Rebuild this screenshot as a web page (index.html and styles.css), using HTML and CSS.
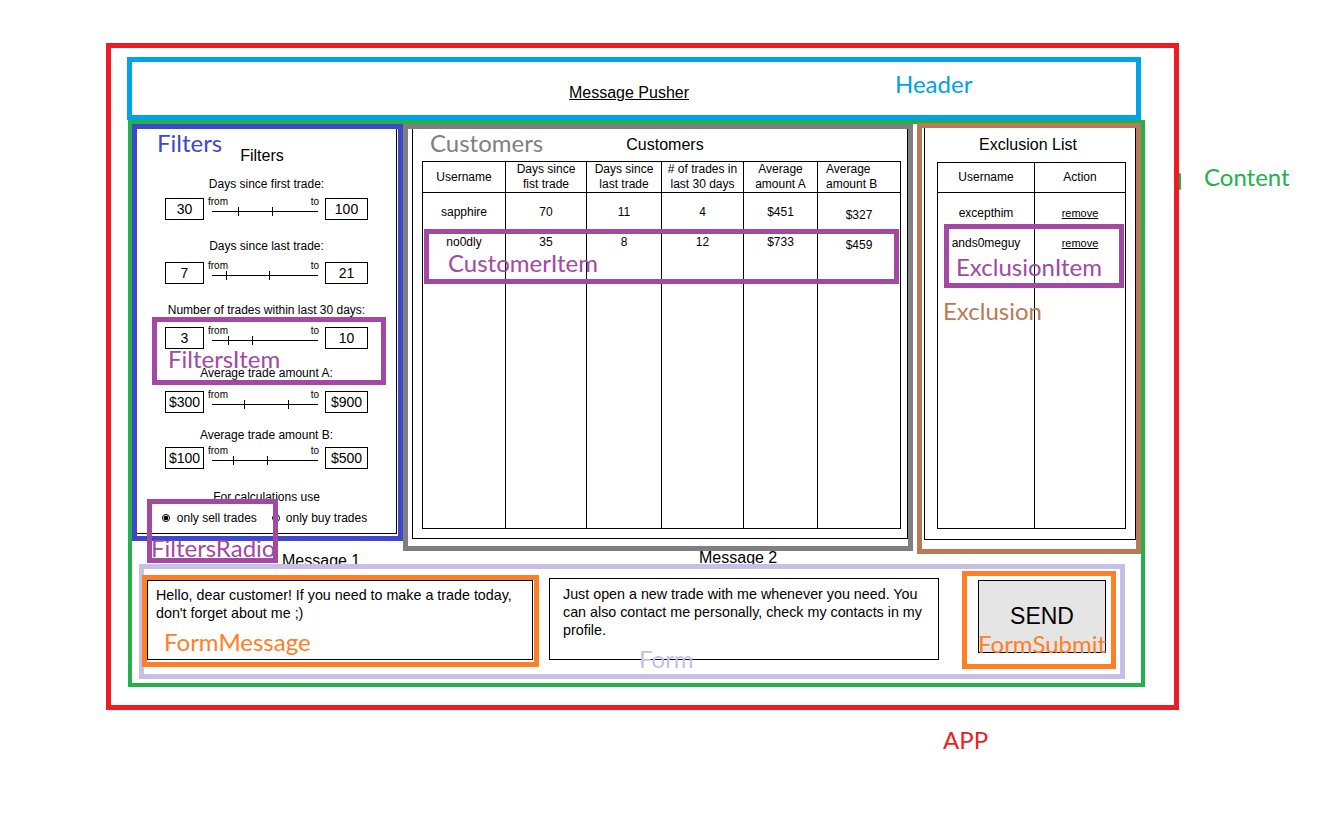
FILE: index.html
```html
<!DOCTYPE html>
<html lang="en">

<head>
    <meta charset="UTF-8">
    <meta name="viewport" content="width=device-width, initial-scale=1.0">
    <title>Message Pusher</title>
    <link rel="stylesheet" href="styles.css">
</head>

<body>
    <div class="app">
        <header class="header">
            <a class="header-title" href="#">Message Pusher</a>
            <span class="note note-header">Header</span>
        </header>

        <main class="content">
            <span class="note note-content">Content</span>
            <span class="content-mark"></span>

            <div class="panels">
                <!-- Filters -->
                <section class="filters">
                    <div class="filters-panel">
                        <h2 class="panel-title">Filters</h2>

                        <div class="filter">
                            <div class="filter-label">Days since first trade:</div>
                            <div class="filter-row">
                                <span class="filter-box">30</span>
                                <div class="slider">
                                    <span class="slider-from">from</span>
                                    <span class="slider-to">to</span>
                                    <span class="tick" style="left: 26px"></span>
                                    <span class="tick" style="left: 60px"></span>
                                </div>
                                <span class="filter-box filter-box-to">100</span>
                            </div>
                        </div>

                        <div class="filter">
                            <div class="filter-label">Days since last trade:</div>
                            <div class="filter-row">
                                <span class="filter-box">7</span>
                                <div class="slider">
                                    <span class="slider-from">from</span>
                                    <span class="slider-to">to</span>
                                    <span class="tick" style="left: 14px"></span>
                                    <span class="tick" style="left: 57px"></span>
                                </div>
                                <span class="filter-box filter-box-to">21</span>
                            </div>
                        </div>

                        <div class="filter">
                            <div class="filter-label">Number of trades within last 30 days:</div>
                            <div class="filter-row">
                                <span class="filter-box">3</span>
                                <div class="slider">
                                    <span class="slider-from">from</span>
                                    <span class="slider-to">to</span>
                                    <span class="tick" style="left: 16px"></span>
                                    <span class="tick" style="left: 40px"></span>
                                </div>
                                <span class="filter-box filter-box-to">10</span>
                            </div>
                        </div>

                        <div class="filter">
                            <div class="filter-label">Average trade amount A:</div>
                            <div class="filter-row">
                                <span class="filter-box">$300</span>
                                <div class="slider">
                                    <span class="slider-from">from</span>
                                    <span class="slider-to">to</span>
                                    <span class="tick" style="left: 32px"></span>
                                    <span class="tick" style="left: 76px"></span>
                                </div>
                                <span class="filter-box filter-box-to">$900</span>
                            </div>
                        </div>

                        <div class="filter">
                            <div class="filter-label">Average trade amount B:</div>
                            <div class="filter-row">
                                <span class="filter-box">$100</span>
                                <div class="slider">
                                    <span class="slider-from">from</span>
                                    <span class="slider-to">to</span>
                                    <span class="tick" style="left: 21px"></span>
                                    <span class="tick" style="left: 55px"></span>
                                </div>
                                <span class="filter-box filter-box-to">$500</span>
                            </div>
                        </div>

                        <div class="calc-label">For calculations use</div>
                        <div class="radios">
                            <label class="radio"><span class="radio-dot radio-dot-checked"></span>only sell trades</label>
                            <label class="radio"><span class="radio-dot"></span>only buy trades</label>
                        </div>
                    </div>

                    <span class="note note-filters">Filters</span>
                    <div class="mark mark-filters-item">
                        <span class="note note-filters-item">FiltersItem</span>
                    </div>
                    <div class="mark mark-filters-radio">
                        <span class="note note-filters-radio">FiltersRadio</span>
                    </div>
                </section>

                <!-- Customers -->
                <section class="customers">
                    <div class="customers-panel">
                        <h2 class="panel-title">Customers</h2>
                        <table class="table customers-table">
                            <thead>
                                <tr>
                                    <th class="col-user">Username</th>
                                    <th class="col-first">Days since<br>fist trade</th>
                                    <th class="col-last">Days since<br>last trade</th>
                                    <th class="col-trades"># of trades in<br>last 30 days</th>
                                    <th class="col-amount-a">Average<br>amount A</th>
                                    <th class="col-amount-b">Average<br>amount B</th>
                                </tr>
                            </thead>
                            <tbody>
                                <tr class="row">
                                    <td>sapphire</td>
                                    <td>70</td>
                                    <td>11</td>
                                    <td>4</td>
                                    <td>$451</td>
                                    <td>$327</td>
                                </tr>
                                <tr class="row">
                                    <td>no0dly</td>
                                    <td>35</td>
                                    <td>8</td>
                                    <td>12</td>
                                    <td>$733</td>
                                    <td>$459</td>
                                </tr>
                                <tr class="row-filler">
                                    <td></td>
                                    <td></td>
                                    <td></td>
                                    <td></td>
                                    <td></td>
                                    <td></td>
                                </tr>
                            </tbody>
                        </table>
                    </div>

                    <span class="note note-customers">Customers</span>
                    <div class="mark mark-customer-item">
                        <span class="note note-customer-item">CustomerItem</span>
                    </div>
                </section>

                <!-- Exclusion -->
                <section class="exclusion">
                    <div class="exclusion-panel">
                        <h2 class="panel-title">Exclusion List</h2>
                        <table class="table exclusion-table">
                            <thead>
                                <tr>
                                    <th class="col-name">Username</th>
                                    <th class="col-action">Action</th>
                                </tr>
                            </thead>
                            <tbody>
                                <tr class="row">
                                    <td>excepthim</td>
                                    <td><a class="remove" href="#">remove</a></td>
                                </tr>
                                <tr class="row">
                                    <td>ands0meguy</td>
                                    <td><a class="remove" href="#">remove</a></td>
                                </tr>
                                <tr class="row-filler">
                                    <td></td>
                                    <td></td>
                                </tr>
                            </tbody>
                        </table>
                    </div>

                    <span class="note note-exclusion">Exclusion</span>
                    <div class="mark mark-exclusion-item">
                        <span class="note note-exclusion-item">ExclusionItem</span>
                    </div>
                </section>
            </div>

            <div class="form-labels">
                <span class="form-label form-label-first">Message 1</span>
                <span class="form-label form-label-second">Message 2</span>
            </div>

            <form class="form" id="messageForm">
                <div class="form-message">
                    <textarea class="message message-first">Hello, dear customer! If you need to make a trade today, don't forget about me ;)</textarea>
                    <span class="note note-form-message">FormMessage</span>
                </div>
                <textarea class="message message-second">Just open a new trade with me whenever you need. You can also contact me personally, check my contacts in my profile.</textarea>
                <div class="form-submit">
                    <button type="submit" class="send">SEND</button>
                    <span class="note note-form-submit">FormSubmit</span>
                </div>
                <span class="note note-form">Form</span>
            </form>
        </main>
    </div>

    <div class="app-note">APP</div>
</body>

</html>
```

FILE: styles.css
```css
* {
    box-sizing: border-box;
}

body {
    margin: 0;
    background-color: #fff;
    color: #000;
    font-family: "Liberation Sans", Arial, sans-serif;
}

/* annotation labels */
.note {
    position: absolute;
    font-family: Lato, "Open Sans", sans-serif;
    font-size: 24px;
    line-height: 24px;
    white-space: nowrap;
}

.mark {
    position: absolute;
    border: 5px solid #a349a4;
}

.note-filters-item,
.note-filters-radio,
.note-customer-item,
.note-exclusion-item {
    color: #a349a4;
}

.app {
    width: 1073px;
    height: 667px;
    margin: 43px 0 0 106px;
    border: 5px solid #ed1c24;
}

.app-note {
    margin: 18px 0 0 943px;
    color: #ed1c24;
    font-family: Lato, "Open Sans", sans-serif;
    font-size: 24px;
    line-height: 24px;
}

/* header */
.header {
    position: relative;
    width: 1014px;
    height: 63px;
    margin: 9px 0 0 16px;
    padding: 22px 10px 0 0;
    border: 5px solid #00a2e8;
    text-align: center;
    line-height: 18px;
}

.header-title {
    font-size: 16px;
    color: #000;
    text-decoration: underline;
}

.note-header {
    left: 763px;
    top: 10px;
    color: #00a2e8;
}

/* content */
.content {
    position: relative;
    width: 1017px;
    height: 567px;
    margin-left: 17px;
    border: 4px solid #22b14c;
}

.note-content {
    left: 1072px;
    top: 41px;
    color: #22b14c;
}

.content-mark {
    position: absolute;
    left: 1047px;
    top: 49px;
    width: 2px;
    height: 17px;
    border-radius: 2px;
    background-color: #22b14c;
}

.panels {
    display: flex;
    align-items: flex-start;
}

.panel-title {
    margin: 0;
    font-size: 16px;
    font-weight: normal;
    line-height: 18px;
    text-align: center;
}

/* filters */
.filters {
    position: relative;
    width: 271px;
    height: 417px;
    border: 5px solid #3f48cc;
}

.filters-panel {
    width: 260px;
    height: 405px;
    padding-top: 18px;
    border-right: 1px solid #000;
    border-bottom: 1px solid #000;
}

.filters-panel .panel-title {
    margin-bottom: 12px;
    padding-right: 9px;
}

.note-filters {
    left: 20px;
    top: 2px;
    color: #3f48cc;
}

.filter {
    margin-bottom: 19px;
}

/* the mockup spacing is hand drawn, so the groups are not quite even */
.filter:nth-of-type(3) { margin-bottom: 17px; }
.filter:nth-of-type(4) { margin-bottom: 15px; }
.filter:nth-of-type(5) { margin-bottom: 21px; }

.filter-label,
.calc-label {
    font-size: 12px;
    line-height: 14px;
    text-align: center;
}

.filter-row {
    display: flex;
    justify-content: center;
    margin-top: 7px;
}

.filter:nth-of-type(2) .filter-row { margin-top: 9px; }
.filter:nth-of-type(3) .filter-row { margin-top: 10px; }
.filter:nth-of-type(4) .filter-row { margin-top: 11px; }
.filter:nth-of-type(5) .filter-row { margin-top: 5px; }

.filter-box {
    width: 39px;
    height: 22px;
    border: 1px solid #000;
    font-size: 14px;
    line-height: 20px;
    text-align: center;
}

.filter-box-to {
    width: 43px;
}

.slider {
    position: relative;
    display: flex;
    justify-content: space-between;
    width: 106px;
    height: 22px;
    margin: 0 7px 0 8px;
    font-size: 10px;
    line-height: 10px;
}

.slider::before {
    content: "";
    position: absolute;
    left: 0;
    right: 0;
    top: 13px;
    height: 1px;
    background-color: #000;
}

.slider-from {
    margin: -1px 0 0 -4px;
}

.slider-to {
    margin: -1px -1px 0 0;
}

.tick {
    position: absolute;
    top: 9px;
    width: 1px;
    height: 9px;
    background-color: #000;
}

.radios {
    display: flex;
    justify-content: center;
    gap: 15px;
    margin-top: 7px;
    padding-right: 4px;
    font-size: 12px;
    line-height: 14px;
}

.radio {
    display: flex;
    align-items: center;
    gap: 7px;
}

.radio + .radio {
    gap: 6px;
}

.radio-dot {
    width: 8px;
    height: 8px;
    border: 1px solid #000;
    border-radius: 50%;
}

.radio-dot-checked {
    background: radial-gradient(circle, #000 0 2px, #fff 2.6px);
}

.mark-filters-item {
    left: 15px;
    top: 188px;
    width: 234px;
    height: 68px;
}

.note-filters-item {
    left: 11px;
    top: 25px;
}

.mark-filters-radio {
    left: 10px;
    top: 370px;
    width: 131px;
    height: 64px;
}

.note-filters-radio {
    left: -1px;
    top: 32px;
}

/* tables */
.table {
    border-collapse: collapse;
    table-layout: fixed;
    border: 1px solid #000;
    font-size: 12px;
}

.table th,
.table td {
    padding: 0;
    border-left: 1px solid #000;
    border-right: 1px solid #000;
    text-align: center;
}

.table th {
    font-weight: normal;
    line-height: 15px;
    border-bottom: 1px solid #000;
}

.table td {
    vertical-align: top;
    line-height: 14px;
}

.table .row td {
    padding-top: 12px;
}

/* customers */
.customers {
    position: relative;
    width: 510px;
    height: 427px;
    border: 5px solid #7f7f7f;
}

.customers-panel {
    width: 496px;
    height: 410px;
    margin-left: 4px;
    padding-top: 7px;
    border: 1px solid #000;
    border-top: none;
}

.customers-panel .panel-title {
    margin-bottom: 7px;
    padding-left: 10px;
}

.customers-table {
    width: 478px;
    height: 368px;
    margin-left: 9px;
}

.customers-table thead tr {
    height: 31px;
}

.customers-table .row {
    height: 30px;
}

.col-user { width: 83px; }
.col-first { width: 81px; }
.col-last { width: 75px; }
.col-trades { width: 82px; }
.col-amount-a { width: 74px; }
.col-amount-b {
    width: 83px;
    padding-left: 8px !important;
    text-align: left !important;
}

.customers-table .row td:last-child {
    padding-top: 15px;
}

.note-customers {
    left: 22px;
    top: 2px;
    color: #7f7f7f;
}

.mark-customer-item {
    left: 16px;
    top: 100px;
    width: 475px;
    height: 55px;
}

.note-customer-item {
    left: 19px;
    top: 17px;
}

/* exclusion */
.exclusion {
    position: relative;
    width: 224px;
    height: 431px;
    margin: -1px 0 0 4px;
    border: 5px solid #b97a57;
}

.exclusion-panel {
    width: 212px;
    height: 412px;
    margin-left: 2px;
    padding-top: 8px;
    border: 1px solid #000;
    border-top: none;
}

.exclusion-panel .panel-title {
    margin-bottom: 8px;
    padding-right: 4px;
}

.exclusion-table {
    width: 188px;
    height: 367px;
    margin-left: 12px;
}

.exclusion-table thead tr {
    height: 30px;
}

.exclusion-table .row {
    height: 30px;
}

.exclusion-table .row td {
    padding-top: 13px;
}

.col-name { width: 97px; }
.col-action { width: 91px; }

.remove {
    color: #000;
    font-size: 11px;
    text-decoration: underline;
}

.note-exclusion {
    left: 21px;
    top: 171px;
    color: #b97a57;
}

.mark-exclusion-item {
    left: 22px;
    top: 96px;
    width: 180px;
    height: 64px;
}

.note-exclusion-item {
    left: 7px;
    top: 26px;
}

/* form */
.form-labels {
    display: flex;
    align-items: flex-start;
    height: 14px;
    margin-top: -4px;
    font-size: 16px;
    line-height: 16px;
}

.form-label {
    white-space: nowrap;
}

.form-label-first {
    width: 80px;
    margin: 3px 0 0 150px;
}

.form-label-second {
    margin-left: 337px;
}

.form {
    position: relative;
    display: flex;
    align-items: flex-start;
    width: 986px;
    height: 115px;
    margin: 0 0 0 7px;
    border: 5px solid #c8bfe7;
}

.form-message {
    position: relative;
    width: 397px;
    height: 92px;
    margin: 6px 0 0 -2px;
    border: 5px solid #ff7f27;
}

.message {
    display: block;
    margin: 0;
    border: 1px solid #000;
    font-family: "Liberation Sans", Arial, sans-serif;
    font-size: 14.3px;
    line-height: 18px;
    color: #000;
    background-color: #fff;
    resize: none;
    overflow: hidden;
}

.message-first {
    width: 386px;
    height: 80px;
    padding: 5px 8px 0 8px;
}

.message-second {
    width: 390px;
    height: 82px;
    margin: 9px 0 0 10px;
    padding: 6px 8px 0 13px;
}

.note-form-message {
    left: 17px;
    top: 50px;
    color: #ff7f27;
}

.form-submit {
    position: relative;
    width: 154px;
    height: 98px;
    margin: 2px 0 0 23px;
    padding: 4px 0 0 11px;
    border: 5px solid #ff7f27;
}

.send {
    display: block;
    width: 128px;
    height: 73px;
    padding: 0;
    border: 1px solid #000;
    border-radius: 0;
    background-color: #e5e5e5;
    color: #000;
    font-family: "Liberation Sans", Arial, sans-serif;
    font-size: 23px;
}

.note-form-submit {
    left: 11px;
    top: 56px;
    color: #ff7f27;
}

.note-form {
    left: 495px;
    top: 78px;
    color: #c8bfe7;
}
```
